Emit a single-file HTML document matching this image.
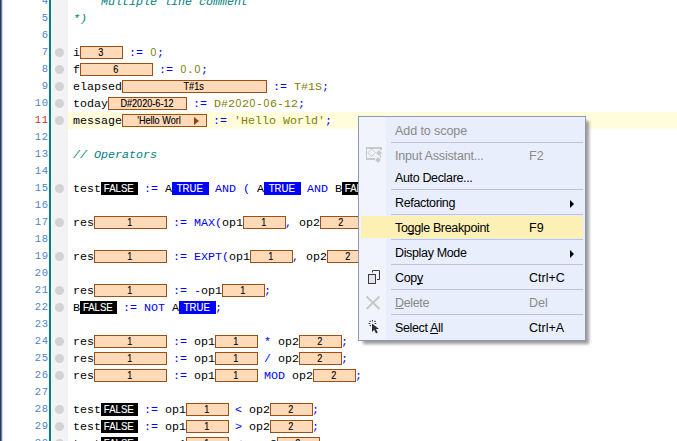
<!DOCTYPE html>
<html><head><meta charset="utf-8"><style>
*{margin:0;padding:0}
html,body{width:677px;height:441px;overflow:hidden;background:#fff;position:relative}
.ln{position:absolute;left:0;width:48.7px;text-align:right;font-family:"Liberation Mono",monospace;font-size:10.5px;letter-spacing:0.7px;line-height:17px;color:#4f84c4;white-space:pre}
.cd{position:absolute;left:73px;font-family:"Liberation Mono",monospace;font-size:11.67px;line-height:17px;white-space:pre;height:17px}
.bx,.bb,.tb{display:inline-block;box-sizing:border-box;height:13px;margin-top:1px;vertical-align:top;margin-right:-1px;font-family:"Liberation Sans",sans-serif;font-size:9.6px;line-height:12px;text-align:center;font-style:normal}
.bx{border:1px solid #9c5018;background:#ffdab9;color:#000}
.bb{width:37px;background:#000;color:#fff;border:1px solid #000}
.tb{width:37px;background:#0000ff;color:#fff;border:1px solid #0000ff}
.v{display:inline-block;transform:scale(0.95,1.12);transform-origin:50% 100%;position:relative;left:-0.7px;-webkit-text-stroke:0.12px}
.bb .v,.tb .v{transform:scale(1.0,1.12)}
.z{display:inline-block;width:7px;text-align:center;font-family:"Liberation Sans",sans-serif;font-size:10.5px;line-height:10px;vertical-align:baseline}
.hw{position:relative;text-align:left}
.hwt{position:absolute;left:13px;top:0}
.arr{position:absolute;left:71px;top:2px;width:0;height:0;border-left:5px solid #8b4513;border-top:4px solid transparent;border-bottom:4px solid transparent}
.dot{position:absolute;left:55px;width:9px;height:9px;border-radius:50%;background:#d3d3d3}
#menu{position:absolute;left:358px;top:116px;width:228px;height:225px;box-sizing:border-box;border:1px solid #8e99b0;background:#e8eefc;box-shadow:4px 4px 3px -1px rgba(0,0,0,0.4)}
#icol{position:absolute;left:0;top:0;width:27px;height:223px;background:#f1f4fd}
u{text-decoration:underline;text-underline-offset:0.6px;text-decoration-thickness:1px;text-decoration-skip-ink:none}
.ic{position:absolute;left:3px;width:24px;height:22px}
.mi{position:absolute;left:36px;font-family:"Liberation Sans",sans-serif;font-size:12.5px;letter-spacing:-0.35px;line-height:22px;color:#000;white-space:pre}
.mi.dis{color:#8a8a8a}
.sc{position:absolute;left:170px;font-family:"Liberation Sans",sans-serif;font-size:12.5px;letter-spacing:0px;line-height:22px;color:#000;white-space:pre}
.sc.dis{color:#8a8a8a}
.sep{position:absolute;left:32px;width:192px;height:1px;background:#c0c4cf}
.sub{position:absolute;left:211px;width:0;height:0;border-left:4.5px solid #000;border-top:4px solid transparent;border-bottom:4px solid transparent}
</style></head><body>
<div style="position:absolute;left:0;top:0;width:1px;height:441px;background:#2a3b5d"></div>
<div style="position:absolute;left:1px;top:0;width:1px;height:441px;background:#7080a3"></div>
<div style="position:absolute;left:2px;top:0;width:1px;height:441px;background:#d5d9ea"></div>
<div style="position:absolute;left:52px;top:0;width:16px;height:441px;background:#f3f3f3"></div>
<div style="position:absolute;left:68px;top:112px;width:609px;height:17px;background:#fffddc"></div>
<div style="position:absolute;left:49px;top:0;width:2px;height:441px;background:#008080"></div>

<div class="ln" style="top:-7px">4</div>
<div class="ln" style="top:10px">5</div>
<div class="ln" style="top:27px">6</div>
<div class="ln" style="top:44px">7</div>
<div class="ln" style="top:61px">8</div>
<div class="ln" style="top:78px">9</div>
<div class="ln" style="top:95px">10</div>
<div class="ln" style="color:#d03030;top:112px">11</div>
<div class="ln" style="top:129px">12</div>
<div class="ln" style="top:146px">13</div>
<div class="ln" style="top:163px">14</div>
<div class="ln" style="top:180px">15</div>
<div class="ln" style="top:197px">16</div>
<div class="ln" style="top:214px">17</div>
<div class="ln" style="top:231px">18</div>
<div class="ln" style="top:248px">19</div>
<div class="ln" style="top:265px">20</div>
<div class="ln" style="top:282px">21</div>
<div class="ln" style="top:299px">22</div>
<div class="ln" style="top:316px">23</div>
<div class="ln" style="top:333px">24</div>
<div class="ln" style="top:350px">25</div>
<div class="ln" style="top:367px">26</div>
<div class="ln" style="top:384px">27</div>
<div class="ln" style="top:401px">28</div>
<div class="ln" style="top:418px">29</div>
<div class="ln" style="top:435px">30</div>
<div class="dot" style="top:48px"></div>
<div class="dot" style="top:65px"></div>
<div class="dot" style="top:82px"></div>
<div class="dot" style="top:99px"></div>
<div class="dot" style="top:116px"></div>
<div class="dot" style="top:184px"></div>
<div class="dot" style="top:218px"></div>
<div class="dot" style="top:252px"></div>
<div class="dot" style="top:286px"></div>
<div class="dot" style="top:303px"></div>
<div class="dot" style="top:337px"></div>
<div class="dot" style="top:354px"></div>
<div class="dot" style="top:371px"></div>
<div class="dot" style="top:405px"></div>
<div class="dot" style="top:422px"></div>
<div class="dot" style="top:439px"></div>
<div class="cd" style="top:-6px"><span style="color:#008080;font-style:italic">    Multiple line comment</span></div>
<div class="cd" style="top:11px"><span style="color:#008080;font-style:italic">*)</span></div>
<div class="cd" style="top:45px"><span style="color:#000000">i</span><span class="bx" style="width:43px"><span class="v">3</span></span><span style="color:#0000ff"> := </span><span style="color:#808000"><span class="z">0</span></span><span style="color:#0000ff">;</span></div>
<div class="cd" style="top:62px"><span style="color:#000000">f</span><span class="bx" style="width:73px"><span class="v">6</span></span><span style="color:#0000ff"> := </span><span style="color:#808000"><span class="z">0</span>.<span class="z">0</span></span><span style="color:#0000ff">;</span></div>
<div class="cd" style="top:79px"><span style="color:#000000">elapsed</span><span class="bx" style="width:145px"><span class="v">T#1s</span></span><span style="color:#0000ff"> := </span><span style="color:#808000">T#1S</span><span style="color:#0000ff">;</span></div>
<div class="cd" style="top:96px"><span style="color:#000000">today</span><span class="bx" style="width:79px"><span class="v">D#2020-6-12</span></span><span style="color:#0000ff"> := </span><span style="color:#808000">D#2<span class="z">0</span>2<span class="z">0</span>-<span class="z">0</span>6-12</span><span style="color:#0000ff">;</span></div>
<div class="cd" style="top:113px"><span style="color:#000000">message</span><span class="bx hw" style="width:85px"><span class="hwt v">'Hello Worl</span><span class="arr"></span></span><span style="color:#0000ff"> := </span><span style="color:#808000">'Hello World'</span><span style="color:#0000ff">;</span></div>
<div class="cd" style="top:147px"><span style="color:#008080;font-style:italic">// Operators</span></div>
<div class="cd" style="top:181px"><span style="color:#000000">test</span><span class="bb"><span class="v">FALSE</span></span><span style="color:#0000ff"> := </span><span style="color:#000000">A</span><span class="tb"><span class="v">TRUE</span></span><span style="color:#0000ff"> AND ( </span><span style="color:#000000">A</span><span class="tb"><span class="v">TRUE</span></span><span style="color:#0000ff"> AND </span><span style="color:#000000">B</span><span class="bb"><span class="v">FALSE</span></span></div>
<div class="cd" style="top:215px"><span style="color:#000000">res</span><span class="bx" style="width:73px"><span class="v">1</span></span><span style="color:#0000ff"> := MAX(</span><span style="color:#000000">op1</span><span class="bx" style="width:43px"><span class="v">1</span></span><span style="color:#0000ff">, </span><span style="color:#000000">op2</span><span class="bx" style="width:43px"><span class="v">2</span></span><span style="color:#0000ff">);</span></div>
<div class="cd" style="top:249px"><span style="color:#000000">res</span><span class="bx" style="width:73px"><span class="v">1</span></span><span style="color:#0000ff"> := EXPT(</span><span style="color:#000000">op1</span><span class="bx" style="width:43px"><span class="v">1</span></span><span style="color:#0000ff">, </span><span style="color:#000000">op2</span><span class="bx" style="width:43px"><span class="v">2</span></span><span style="color:#0000ff">);</span></div>
<div class="cd" style="top:283px"><span style="color:#000000">res</span><span class="bx" style="width:73px"><span class="v">1</span></span><span style="color:#0000ff"> := -</span><span style="color:#000000">op1</span><span class="bx" style="width:43px"><span class="v">1</span></span><span style="color:#0000ff">;</span></div>
<div class="cd" style="top:300px"><span style="color:#000000">B</span><span class="bb"><span class="v">FALSE</span></span><span style="color:#0000ff"> := NOT </span><span style="color:#000000">A</span><span class="tb"><span class="v">TRUE</span></span><span style="color:#0000ff">;</span></div>
<div class="cd" style="top:334px"><span style="color:#000000">res</span><span class="bx" style="width:73px"><span class="v">1</span></span><span style="color:#0000ff"> := </span><span style="color:#000000">op1</span><span class="bx" style="width:43px"><span class="v">1</span></span><span style="color:#0000ff"> * </span><span style="color:#000000">op2</span><span class="bx" style="width:43px"><span class="v">2</span></span><span style="color:#0000ff">;</span></div>
<div class="cd" style="top:351px"><span style="color:#000000">res</span><span class="bx" style="width:73px"><span class="v">1</span></span><span style="color:#0000ff"> := </span><span style="color:#000000">op1</span><span class="bx" style="width:43px"><span class="v">1</span></span><span style="color:#0000ff"> / </span><span style="color:#000000">op2</span><span class="bx" style="width:43px"><span class="v">2</span></span><span style="color:#0000ff">;</span></div>
<div class="cd" style="top:368px"><span style="color:#000000">res</span><span class="bx" style="width:73px"><span class="v">1</span></span><span style="color:#0000ff"> := </span><span style="color:#000000">op1</span><span class="bx" style="width:43px"><span class="v">1</span></span><span style="color:#0000ff"> MOD </span><span style="color:#000000">op2</span><span class="bx" style="width:43px"><span class="v">2</span></span><span style="color:#0000ff">;</span></div>
<div class="cd" style="top:402px"><span style="color:#000000">test</span><span class="bb"><span class="v">FALSE</span></span><span style="color:#0000ff"> := </span><span style="color:#000000">op1</span><span class="bx" style="width:43px"><span class="v">1</span></span><span style="color:#0000ff"> &lt; </span><span style="color:#000000">op2</span><span class="bx" style="width:43px"><span class="v">2</span></span><span style="color:#0000ff">;</span></div>
<div class="cd" style="top:419px"><span style="color:#000000">test</span><span class="bb"><span class="v">FALSE</span></span><span style="color:#0000ff"> := </span><span style="color:#000000">op1</span><span class="bx" style="width:43px"><span class="v">1</span></span><span style="color:#0000ff"> &gt; </span><span style="color:#000000">op2</span><span class="bx" style="width:43px"><span class="v">2</span></span><span style="color:#0000ff">;</span></div>
<div class="cd" style="top:436px"><span style="color:#000000">test</span><span class="bb"><span class="v">FALSE</span></span><span style="color:#0000ff"> := </span><span style="color:#000000">op1</span><span class="bx" style="width:43px"><span class="v">1</span></span><span style="color:#0000ff"> &lt;= </span><span style="color:#000000">op2</span><span class="bx" style="width:43px"><span class="v">2</span></span><span style="color:#0000ff">;</span></div>
<div id="menu"><div id="icol"></div>
<div class="mi dis" style="top:3px;letter-spacing:-0.08px;">Add to scope</div>
<div class="sep" style="top:25px"></div>
<div class="mi dis" style="top:28px;letter-spacing:-0.17px;">Input Assistant...</div>
<div class="sc dis" style="top:28px">F2</div>
<svg class="ic" style="top:27px" viewBox="0 0 24 22" width="24" height="22"><g fill="#c9c9c9"><rect x="4" y="3" width="16" height="2"/><rect x="4" y="3" width="1" height="13"/><rect x="4" y="14" width="9" height="2"/><rect x="18" y="3" width="2" height="3"/><rect x="18" y="11" width="1" height="3"/><path d="M17 6 L20 9 L17 12 L14 9Z"/><path d="M16 13 L19 16 L16 19 L13 16Z"/></g><path d="M9.75 5 L13.5 8.75 L9.75 12.5 L6 8.75Z" fill="none" stroke="#c9c9c9" stroke-width="1"/></svg>
<div class="mi" style="top:50px;">Auto Declare...</div>
<div class="sep" style="top:72px"></div>
<div class="mi" style="top:75px;">Refactoring</div>
<div class="sub" style="top:82.5px"></div>
<div class="sep" style="top:97px"></div>
<div style="position:absolute;left:2px;top:99px;width:222px;height:22px;background:#fcf0b4"></div>
<div class="mi" style="top:100px;">To<u>g</u>gle Breakpoint</div>
<div class="sc" style="top:100px">F9</div>
<div class="sep" style="top:122px"></div>
<div class="mi" style="top:125px;">Display Mode</div>
<div class="sub" style="top:132.5px"></div>
<div class="sep" style="top:147px"></div>
<div class="mi" style="top:150px;">Cop<u>y</u></div>
<div class="sc" style="top:150px">Ctrl+C</div>
<svg class="ic" style="top:149px" viewBox="0 0 24 22" width="24" height="22"><path d="M10.5 6.5 V4.5 H17.5 V13.5 H15" fill="none" stroke="#3a3a3a" stroke-width="1"/><rect x="6.5" y="8.5" width="7" height="9" fill="#e4e4ee" stroke="#3a3a3a" stroke-width="1"/></svg>
<div class="sep" style="top:172px"></div>
<div class="mi dis" style="top:175px;"><u>D</u>elete</div>
<div class="sc dis" style="top:175px">Del</div>
<svg class="ic" style="top:174px" viewBox="0 0 24 22" width="24" height="22"><path d="M4.5 5.5 L17.5 18 M17.5 5.5 L4.5 18" stroke="#c6c6c6" stroke-width="1.8" fill="none"/></svg>
<div class="sep" style="top:197px"></div>
<div class="mi" style="top:200px;">Select <u>A</u>ll</div>
<div class="sc" style="top:200px">Ctrl+A</div>
<svg class="ic" style="top:199px" viewBox="0 0 24 22" width="24" height="22"><path d="M10 7.5 L10 16 L12.2 13.8 L14 17.5 L15.8 16.6 L14 13 L17 13 Z" fill="#2e2e2e"/><g fill="#3a3a3a"><rect x="10" y="4" width="1" height="1.5"/><rect x="7.5" y="4.8" width="1.4" height="1.2"/><rect x="12.3" y="4.8" width="1.4" height="1.2"/><rect x="6.5" y="7" width="1.8" height="1"/><rect x="12.6" y="7" width="1.6" height="1"/><rect x="7.6" y="9" width="1.4" height="1.2"/></g></svg>
</div>
</body></html>
